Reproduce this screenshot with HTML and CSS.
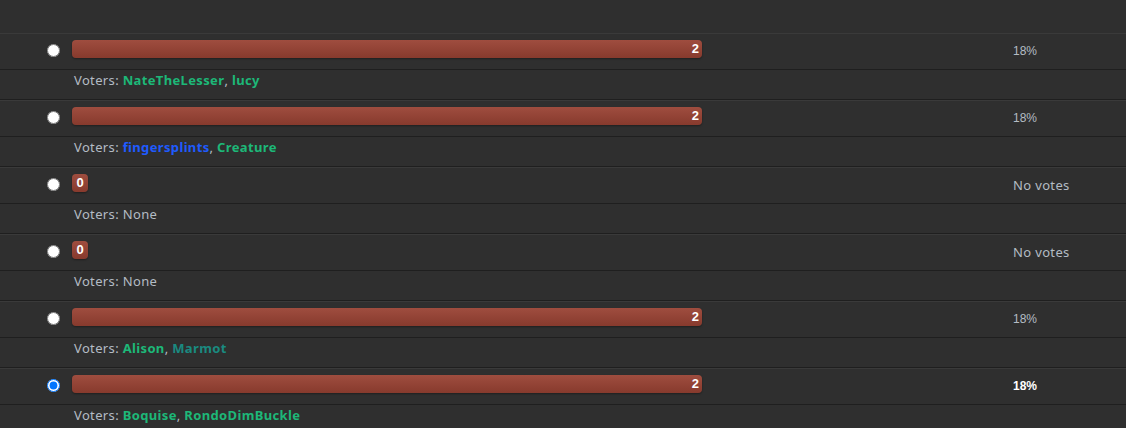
FILE: index.html
```html
<!DOCTYPE html>
<html lang="en">
<head>
  <meta charset="UTF-8" />
  <title>Poll results</title>
  <link rel="stylesheet" href="styles.css">
</head>
<body>
  <div class="poll">

    <div class="option">
      <div class="bar-row">
        <div class="pick"><input type="radio" name="vote"></div>
        <div class="bar-cell"><div class="bar" style="width: 630px">2</div></div>
        <div class="percent">18%</div>
      </div>
      <div class="voters">Voters: <span class="name green">NateTheLesser</span>, <span class="name green">lucy</span></div>
    </div>

    <div class="option">
      <div class="bar-row">
        <div class="pick"><input type="radio" name="vote"></div>
        <div class="bar-cell"><div class="bar" style="width: 630px">2</div></div>
        <div class="percent">18%</div>
      </div>
      <div class="voters">Voters: <span class="name blue">fingersplints</span>, <span class="name green">Creature</span></div>
    </div>

    <div class="option">
      <div class="bar-row">
        <div class="pick"><input type="radio" name="vote"></div>
        <div class="bar-cell"><div class="bar empty">0</div></div>
        <div class="percent none">No votes</div>
      </div>
      <div class="voters">Voters: None</div>
    </div>

    <div class="option">
      <div class="bar-row">
        <div class="pick"><input type="radio" name="vote"></div>
        <div class="bar-cell"><div class="bar empty">0</div></div>
        <div class="percent none">No votes</div>
      </div>
      <div class="voters">Voters: None</div>
    </div>

    <div class="option">
      <div class="bar-row">
        <div class="pick"><input type="radio" name="vote"></div>
        <div class="bar-cell"><div class="bar" style="width: 630px">2</div></div>
        <div class="percent">18%</div>
      </div>
      <div class="voters">Voters: <span class="name green">Alison</span>, <span class="name teal">Marmot</span></div>
    </div>

    <div class="option">
      <div class="bar-row">
        <div class="pick"><input type="radio" name="vote" checked></div>
        <div class="bar-cell"><div class="bar" style="width: 630px">2</div></div>
        <div class="percent mine">18%</div>
      </div>
      <div class="voters">Voters: <span class="name green">Boquise</span>, <span class="name green">RondoDimBuckle</span></div>
    </div>

  </div>
</body>
</html>
```

FILE: styles.css
```css
body {
  margin: 0;
  background: #2f2f2f;
  font-family: 'Noto Sans', sans-serif;
  color: #b4bcc4;
}
.poll {
  padding-top: 33px;
}
.option {
  border-top: 1px solid #3a3a3a;
}
.bar-row {
  display: grid;
  grid-template-columns: 66px 1fr 113px;
  height: 35px;
  border-bottom: 1px solid #1f1f1f;
}
.pick {
  display: flex;
  justify-content: flex-end;
  padding-top: 10px;
  padding-right: 6px;
}
.pick input {
  margin: 0;
  width: 13px;
  height: 13px;
}
.bar-cell {
  padding-top: 6px;
  padding-left: 6px;
}
.bar {
  height: 18px;
  box-sizing: border-box;
  border-radius: 4px;
  background: linear-gradient(#9f4d3f, #873a2d);
  color: #fff;
  font-family: 'Liberation Sans', Arial, sans-serif;
  font-weight: bold;
  font-size: 13px;
  line-height: 18px;
  text-align: right;
  padding-right: 3px;
  box-shadow: 0 1px 2px rgba(0, 0, 0, 0.35);
}
.bar.empty {
  width: 16px;
  text-align: center;
  padding-right: 0;
}
.percent {
  font-family: 'Liberation Sans', Arial, sans-serif;
  font-size: 12px;
  padding-top: 10px;
  color: #b4bcc4;
}
.percent.none {
  font-family: 'Noto Sans', sans-serif;
  font-size: 13px;
  letter-spacing: 0.35px;
  padding-top: 8px;
}
.percent.mine {
  color: #fff;
  font-weight: bold;
}
.voters {
  height: 30px;
  box-sizing: border-box;
  padding: 1px 0 0 74px;
  font-size: 13px;
  letter-spacing: 0.35px;
  border-bottom: 1px solid #1f1f1f;
}
.name {
  font-weight: bold;
}
.green {
  color: #1db878;
}
.blue {
  color: #1f5bff;
}
.teal {
  color: #1a8a80;
}
```
